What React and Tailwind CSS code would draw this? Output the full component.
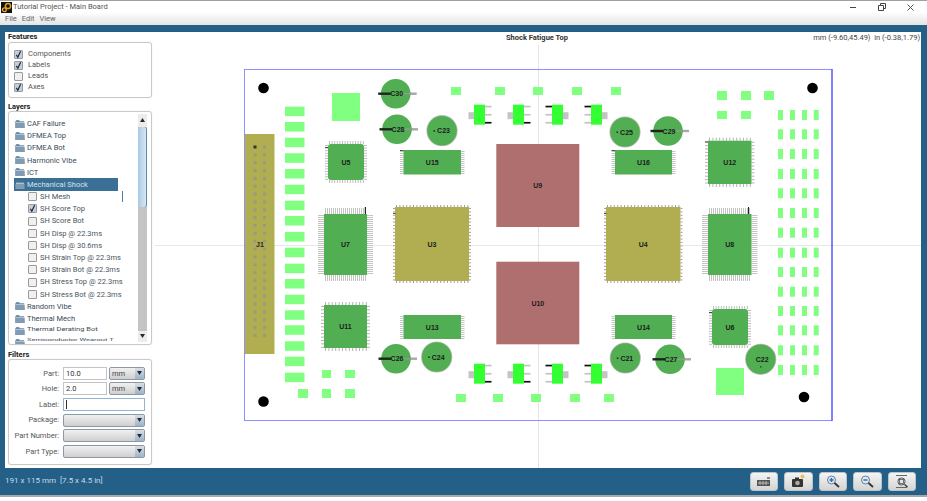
import { Fragment } from "react";

const LIGHT = "#80ff80";
const GREEN = "#52ae52";
const OLIVE = "#b0ae50";
const ROSE = "#b06f6f";

const layers = ["CAF Failure", "DFMEA Top", "DFMEA Bot", "Harmonic Vibe", "ICT"];
const shock = [
  ["SH Mesh", false],
  ["SH Score Top", true],
  ["SH Score Bot", false],
  ["SH Disp @ 22.3ms", false],
  ["SH Disp @ 30.6ms", false],
  ["SH Strain Top @ 22.3ms", false],
  ["SH Strain Bot @ 22.3ms", false],
  ["SH Stress Top @ 22.3ms", false],
  ["SH Stress Bot @ 22.3ms", false],
];

const chips = [
  { l: "U5", x: 328, y: 144, w: 36, h: 36, r: 3, f: GREEN, len: 3, p: 2.6, c: "#bdbdbd", mark: [325, 147, 3, 0.8] },
  { l: "U15", x: 403.5, y: 150, w: 57.5, h: 24.5, f: GREEN, len: 3.5, p: 2, c: "#c4c4c4", sides: "lr", mark: [400, 150, 3.5, 0.8] },
  { l: "U7", x: 324, y: 214, w: 43, h: 61, f: GREEN, len: 6, p: 2, c: "#c4c4c4", mark: [364.8, 207, 1.2, 7] },
  { l: "U3", x: 395, y: 207, w: 74, h: 74, f: OLIVE, len: 2, p: 3.4, c: "#a0a0a0", mark: [393, 213, 2.5, 0.8] },
  { l: "U9", x: 496.3, y: 144, w: 83, h: 83, f: ROSE },
  { l: "U10", x: 496.3, y: 261.7, w: 83, h: 82.6, f: ROSE },
  { l: "U11", x: 324, y: 305, w: 43, h: 43, f: GREEN, len: 3, p: 3.4, c: "#b5b5b5" },
  { l: "U13", x: 403.5, y: 315, w: 57.5, h: 24, f: GREEN, len: 3.5, p: 2, c: "#c4c4c4", sides: "lr" },
  { l: "U16", x: 615, y: 150, w: 57, h: 24.5, f: GREEN, len: 3.5, p: 2, c: "#c4c4c4", sides: "lr", mark: [611.5, 150, 3.5, 0.8] },
  { l: "U14", x: 615, y: 315, w: 57, h: 24, f: GREEN, len: 3.5, p: 2, c: "#c4c4c4", sides: "lr" },
  { l: "U12", x: 708, y: 140.7, w: 43.5, h: 43.3, f: GREEN, len: 3, p: 3.4, c: "#b5b5b5", mark: [705, 141.5, 3, 0.8] },
  { l: "U8", x: 708, y: 214, w: 43.5, h: 61, f: GREEN, len: 6, p: 2, c: "#c4c4c4", mark: [748, 207, 1, 7] },
  { l: "U4", x: 606, y: 207, w: 74.5, h: 74, f: OLIVE, len: 2, p: 3.4, c: "#a0a0a0", mark: [604, 213, 2.5, 0.8] },
  { l: "U6", x: 712, y: 309, w: 36, h: 36, r: 3, f: GREEN, len: 3, p: 2.6, c: "#bdbdbd", mark: [709, 312, 3, 0.8] },
];

// caps: bar = long black lead on the left, ring = grey halo with a small dot
const caps = [
  { l: "C30", x: 395.7, y: 93.7, bar: true },
  { l: "C28", x: 397, y: 129.3, bar: true },
  { l: "C23", x: 442, y: 130.7, ring: true },
  { l: "C26", x: 396, y: 358.7, bar: true },
  { l: "C24", x: 436.7, y: 357, ring: true },
  { l: "C25", x: 625, y: 132, ring: true },
  { l: "C29", x: 668, y: 131, bar: true },
  { l: "C21", x: 625.3, y: 358, ring: true },
  { l: "C27", x: 670, y: 359.3, bar: true },
  { l: "C22", x: 760.7, y: 359.3, ring: true, dotBelow: true },
];

const pads = [
  [451, 87, 10, 8], [495, 87, 10, 8], [533, 87, 10, 8], [572, 87, 10, 8], [611, 87, 10, 8],
  [717, 91, 10, 9], [741, 91, 10, 9], [764, 91, 10, 9], [717, 111, 10, 8], [741, 111, 10, 8],
  [456, 394, 10, 8], [493, 394, 10, 8], [531, 394, 10, 8], [570, 394, 10, 8], [604, 394, 10, 8],
  [322, 370, 9, 8], [345, 370, 10, 8], [298, 389, 10, 9], [322, 389, 9, 9], [345, 389, 10, 9],
  [332, 93, 28, 28], [716, 368, 28, 27],
];

const stripY = [106.7, 122, 137.7, 153.3, 169, 184.7, 200.7, 216, 232, 247.7, 263.7, 279, 294.7, 310.3, 325.3, 341.3, 356.7, 372.7];
const gridX = [778, 790, 802, 813.7];
const gridY = [110, 129.3, 149, 169, 188.3, 208, 227.7, 247.7, 267, 286.7, 306, 325.3, 345.3, 365];

// x, y, black lead side
const sots = [
  [474, 104.7, "r"], [513, 104.7, "r"], [552, 104.7, "l"], [591, 104.7, "l"],
  [474, 363.7, "r"], [513, 363.7, "r"], [552, 363.7, "l"], [591, 363.7, "l"],
];

function Leads({ c }) {
  if (!c.len) return null;
  const sides = c.sides || "lrtb";
  const ticks = [];
  if (sides.includes("l")) {
    for (let y = c.y + 1; y < c.y + c.h - 0.5; y += c.p) {
      ticks.push(<rect key={"l" + y} x={c.x - c.len} y={y} width={c.len} height={1} fill={c.c} />);
      ticks.push(<rect key={"r" + y} x={c.x + c.w} y={y} width={c.len} height={1} fill={c.c} />);
    }
  }
  if (sides.includes("t")) {
    for (let x = c.x + 1; x < c.x + c.w - 0.5; x += c.p) {
      ticks.push(<rect key={"t" + x} x={x} y={c.y - c.len} width={1} height={c.len} fill={c.c} />);
      ticks.push(<rect key={"b" + x} x={x} y={c.y + c.h} width={1} height={c.len} fill={c.c} />);
    }
  }
  return <>{ticks}</>;
}

function Board() {
  return (
    <svg className="w-full h-full block font-['Liberation_Sans',sans-serif]" viewBox="153 32 768 436">
      <line x1="155" y1="245.5" x2="921" y2="245.5" stroke="#e8e8e8" />
      <line x1="538.5" y1="45" x2="538.5" y2="468" stroke="#e4e4e4" />

      <rect x="244.5" y="69.5" width="587.5" height="351" fill="none" stroke="#8f8fff" />
      <line x1="832" y1="69" x2="832" y2="421" stroke="#3a3aff" />

      {[[263.5, 88], [263.5, 401.5], [812.5, 88], [804, 397]].map(([x, y]) => (
        <circle key={x + "-" + y} cx={x} cy={y} r="5.3" fill="#000" />
      ))}

      {/* connector */}
      <rect x="245" y="134" width="29.5" height="220" fill={OLIVE} />
      {Array.from({ length: 25 }).map((_, i) => (
        <Fragment key={i}>
          <rect x="253.5" y={145.5 + i * 7.85} width="3" height="3" fill={i === 0 ? "#333" : "#9a9a80"} />
          <rect x="263" y={145.5 + i * 7.85} width="3" height="3" fill="#9a9a80" />
        </Fragment>
      ))}
      <text x="260" y="247" fontSize="7" fontWeight="700" textAnchor="middle" fill="#222">J1</text>

      {stripY.map((y) => <rect key={y} x="285" y={y} width="19.5" height="9.5" fill={LIGHT} />)}
      {pads.map(([x, y, w, h]) => <rect key={x + "-" + y} x={x} y={y} width={w} height={h} fill={LIGHT} />)}
      {gridX.map((x) => gridY.map((y) => <rect key={x + "-" + y} x={x} y={y} width="5" height="10" fill={LIGHT} />))}

      {chips.map((c) => (
        <g key={c.l}>
          <Leads c={c} />
          <rect x={c.x} y={c.y} width={c.w} height={c.h} rx={c.r || 0} fill={c.f} />
          {c.mark && <rect x={c.mark[0]} y={c.mark[1]} width={c.mark[2]} height={c.mark[3]} fill="#222" />}
          <text x={c.x + c.w / 2} y={c.y + c.h / 2 + 2.5} fontSize="7" fontWeight="700" textAnchor="middle" fill="#1c1c1c">{c.l}</text>
        </g>
      ))}

      {caps.map((c) => (
        <g key={c.l}>
          {c.ring && <circle cx={c.x} cy={c.y} r="15.6" fill="#bcbcbc" />}
          {c.bar && <rect x={c.x + 4} y={c.y - 1.2} width="17" height="2.4" fill="#a8a8a8" />}
          <circle cx={c.x} cy={c.y} r="14.8" fill={GREEN} />
          {c.bar && <rect x={c.x - 17.5} y={c.y - 1.2} width="12.5" height="2.4" fill="#222" />}
          {c.bar && <rect x={c.x + 6} y={c.y - 0.8} width="9" height="1.6" fill="#8c9c8c" />}
          {c.ring && !c.dotBelow && <rect x={c.x - 8.5} y={c.y - 0.5} width="1.5" height="1.5" fill="#222" />}
          {c.dotBelow && <rect x={c.x - 0.5} y={c.y + 7} width="1.2" height="1.2" fill="#222" />}
          <text x={c.x + (c.bar ? 1 : 1.5)} y={c.y + 2.5} fontSize="7" fontWeight="700" textAnchor="middle" fill="#1c1c1c">{c.l}</text>
        </g>
      ))}

      {sots.map(([x, y, side]) => {
        const right = side === "r";
        return (
          <g key={x + "-" + y}>
            <rect x={right ? x - 5.5 : x + 11} y={y + 7.5} width="5.5" height="7" fill="#c4c4c4" />
            {[1.8, 10, 18].map((dy) => {
              const black = right ? dy === 18 : dy === 1.8;
              return (
                <rect key={dy} x={right ? x + 11 : x - 6.5} y={y + dy - 0.8} width="6.5" height="1.7" fill={black ? "#111" : "#c4c4c4"} />
              );
            })}
            <rect x={x} y={y} width="11" height="20" fill="#33ff33" />
          </g>
        );
      })}
    </svg>
  );
}

function Check({ on }) {
  return (
    <div className={`w-[9px] h-[9px] shrink-0 border border-[#9a9a9a] rounded-[1px] flex items-center justify-center ${on ? "bg-[#c3cfdc]" : "bg-[#f0f0f0]"}`}>
      {on && (
        <svg width="8" height="9" viewBox="0 0 8 9">
          <path d="M1.6 5 L3.2 7.6 L6.4 0.8" fill="none" stroke="#1e2a38" strokeWidth="1.4" />
        </svg>
      )}
    </div>
  );
}

function Folder() {
  return (
    <svg width="10" height="10" viewBox="0 0 11 10" className="shrink-0">
      <path d="M0.5 2 L1.5 0.8 H4.5 L5.5 2 H10 L10.5 9.5 H0.5 Z" fill="#4f7391" />
      <path d="M0.5 4 H10.5 V9.5 H0.5 Z" fill="#7f9cb4" />
      <path d="M1 2.6 H10 V3.6 H1 Z" fill="#d2dde6" />
    </svg>
  );
}

function Arrow({ up }) {
  return (
    <svg width="5" height="4" viewBox="0 0 5 4">
      <path d={up ? "M2.5 0 L5 4 H0 Z" : "M0 0 H5 L2.5 4 Z"} fill="#2a2a2a" />
    </svg>
  );
}

function Combo({ text, wide }) {
  return (
    <div className={`${wide ? "w-[82px]" : "w-[36px]"} h-[13px] flex border border-[#8d98a5] rounded-[2px] bg-gradient-to-b from-[#f1f1f1] to-[#cfcfcf] overflow-hidden`}>
      <div className="flex-1 pl-[2px] leading-[12px] text-[7.5px] text-[#444]">{text}</div>
      <div className="w-[9px] bg-gradient-to-b from-[#d5dfe9] to-[#9db3c8] flex items-center justify-center">
        <Arrow />
      </div>
    </div>
  );
}

function Field({ text, focus }) {
  return (
    <div className={`h-[13px] ${focus ? "w-[82px] border-[#8fb4d6]" : "w-[44px] border-[#c4c4c4]"} border bg-white pl-[2px] leading-[12px] text-[7.5px] text-[#333]`}>
      {text}
      {focus && <span className="inline-block w-px h-[9px] bg-[#333] mt-[1px]" />}
    </div>
  );
}

function FilterRow({ label, children }) {
  return (
    <div className="h-[15.6px] flex items-center">
      <div className="w-[46px] mr-[4px] text-right text-[7.5px] text-[#555] whitespace-nowrap">{label}</div>
      <div className="flex gap-[2px]">{children}</div>
    </div>
  );
}

function TreeRow({ text, cls }) {
  return (
    <div className="h-[12.2px] flex items-center gap-[2px] pl-[1px]">
      <Folder />
      <span className={`text-[7.5px] text-[#3a4a58] whitespace-nowrap ${cls || ""}`}>{text}</span>
    </div>
  );
}

function ToolBtn({ children }) {
  return (
    <div className="w-[28.5px] h-[19px] rounded-[3px] bg-gradient-to-b from-[#f4f4f4] to-[#d4d4d4] border border-[#b9c4cc] flex items-center justify-center">
      <svg width="16" height="15" viewBox="0 0 16 15">{children}</svg>
    </div>
  );
}

export default function App() {
  return (
    <div className="w-[927px] h-[501px] bg-white flex flex-col overflow-hidden font-['Roboto',sans-serif]">
      <div className="h-[13px] border-t border-[#a0a0a0] flex items-center bg-white">
        <svg width="11" height="11" viewBox="0 0 11 11" className="ml-px shrink-0">
          <rect width="11" height="11" fill="#111" />
          <circle cx="7" cy="4" r="2.6" fill="none" stroke="#e0a020" strokeWidth="1.5" />
          <circle cx="3.4" cy="7.8" r="1.9" fill="none" stroke="#e8b030" strokeWidth="1.3" />
        </svg>
        <span className="ml-px text-[7.5px] text-[#555]">Tutorial Project - Main Board</span>
        <div className="ml-auto flex items-center">
          <div className="w-[6px] h-px bg-[#444] mr-[22px]" />
          <svg width="8" height="8" viewBox="0 0 8 8" className="mr-[21px]">
            <path d="M0.5 2.5 H5.5 V7.5 H0.5 Z M2.5 2.5 V0.5 H7.5 V5.5 H5.5" fill="none" stroke="#444" />
          </svg>
          <svg width="7" height="7" viewBox="0 0 7 7" className="mr-[13px]">
            <path d="M0.5 0.5 L6.5 6.5 M6.5 0.5 L0.5 6.5" stroke="#555" />
          </svg>
        </div>
      </div>
      <div className="h-[12px] bg-gradient-to-b from-[#fdfdfd] to-[#e4e4e4] flex items-center gap-[5px] pl-[5px] text-[7.5px] text-[#666]">
        <span>File</span>
        <span>Edit</span>
        <span>View</span>
      </div>

      <div className="flex-1 bg-[#235f86] pt-[7px] pl-[5px] pr-[6px] flex flex-col min-h-0">
        <div className="flex-1 flex min-h-0">
          <div className="w-[148px] bg-white pl-[3px] pr-px shrink-0">
            <div className="h-[10px] text-[7.5px] leading-[10px] font-bold text-[#222]">Features</div>
            <div className="h-[55.5px] border border-[#c9c9c9] rounded-[3px] pt-[5.5px] pl-[5px] flex flex-col shadow-[0_0_1px_#ccc]">
              {[["Components", true], ["Labels", true], ["Leads", false], ["Axes", true]].map(([t, on]) => (
                <div key={t} className="h-[11px] flex items-center gap-[5px]">
                  <Check on={on} />
                  <span className="text-[7.5px] text-[#555]">{t}</span>
                </div>
              ))}
            </div>

            <div className="h-[13px] pt-[4px] text-[7.5px] leading-[10px] font-bold text-[#222]">Layers</div>
            <div className="h-[234px] border border-[#c9c9c9] rounded-[3px] relative overflow-hidden shadow-[0_0_1px_#ccc] pl-[5px] pt-[6px]">
              {layers.map((t) => <TreeRow key={t} text={t} />)}
              <div className="h-[12.2px] w-[104px] bg-[#3a6f96] flex items-center gap-[2px] pl-[1px]">
                <Folder />
                <span className="text-[7.5px] text-[#d4e2ec] whitespace-nowrap">Mechanical Shock</span>
              </div>
              {shock.map(([t, on]) => (
                <div key={t} className="h-[12.2px] flex items-center gap-[3px] pl-[14px]">
                  <Check on={on} />
                  <span className="text-[7.5px] text-[#4a5560] whitespace-nowrap">{t}</span>
                </div>
              ))}
              <TreeRow text="Random Vibe" />
              <TreeRow text="Thermal Mech" />
              <TreeRow text="Thermal Derating Bot" cls="scale-y-75 origin-top" />
              <TreeRow text="Semiconductor Wearout T" cls="scale-y-50 origin-top" />

              <div className="absolute left-[113px] top-[79px] w-px h-[11px] bg-[#4f7da3]" />
              <div className="absolute right-[4px] top-[2px] bottom-[2px] w-[9px] bg-[#c4c4c4] flex flex-col">
                <div className="h-[13px] bg-[#ececec] flex items-center justify-center"><Arrow up /></div>
                <div className="h-[80px] bg-gradient-to-r from-[#a9c9e6] to-[#d9e8f4] rounded-[3px] border-r border-[#5d88ad]" />
                <div className="flex-1" />
                <div className="h-[11px] bg-[#ececec] flex items-center justify-center"><Arrow /></div>
              </div>
            </div>

            <div className="h-[14px] pt-[5px] text-[7.5px] leading-[9px] font-bold text-[#222]">Filters</div>
            <div className="h-[106px] border border-[#c9c9c9] rounded-[3px] pt-[6px] pl-[4px] shadow-[0_0_1px_#ccc]">
              <FilterRow label="Part:"><Field text="10.0" /><Combo text="mm" /></FilterRow>
              <FilterRow label="Hole:"><Field text="2.0" /><Combo text="mm" /></FilterRow>
              <FilterRow label="Label:"><Field focus /></FilterRow>
              <FilterRow label="Package:"><Combo wide /></FilterRow>
              <FilterRow label="Part Number:"><Combo wide /></FilterRow>
              <FilterRow label="Part Type:"><Combo wide /></FilterRow>
            </div>
          </div>

          <div className="flex-1 bg-white relative min-w-0">
            <Board />
            <div className="absolute left-0 right-0 top-0 text-center text-[7.5px] font-bold text-[#333]">Shock Fatigue Top</div>
            <div className="absolute right-[1px] top-0 text-[7.5px] text-[#444] whitespace-pre">mm (-9.60,45.49)  in (-0.38,1.79)</div>
          </div>
        </div>

        <div className="h-[26px] flex items-center shrink-0 justify-between">
          <span className="text-[8px] text-[#c8dbe8] whitespace-pre">191 x 115 mm  [7.5 x 4.5 in]</span>
          <div className="flex gap-[6px] mr-[5px]">
            <ToolBtn>
              <rect x="1" y="6" width="13" height="6" fill="#555" />
              <path d="M2 9 H13 M4 7 V11 M7 7 V11 M10 7 V11" stroke="#ccc" strokeWidth="0.8" />
              <rect x="11" y="3" width="3" height="2" fill="#888" />
            </ToolBtn>
            <ToolBtn>
              <rect x="2" y="5" width="11" height="8" rx="1" fill="#333" />
              <rect x="5" y="3.5" width="4" height="2" fill="#333" />
              <circle cx="7.5" cy="9" r="2.3" fill="#aaa" />
              <circle cx="12.5" cy="2.5" r="2" fill="#e8c060" />
            </ToolBtn>
            <ToolBtn>
              <circle cx="6.5" cy="6" r="4" fill="#dbe8f2" stroke="#6a8094" />
              <path d="M4.5 6 H8.5 M6.5 4 V8" stroke="#1f6fc0" strokeWidth="1.4" />
              <path d="M9.5 9 L14 13" stroke="#333" strokeWidth="1.8" />
            </ToolBtn>
            <ToolBtn>
              <circle cx="6.5" cy="6" r="4" fill="#dbe8f2" stroke="#6a8094" />
              <path d="M4.5 6 H8.5" stroke="#1f6fc0" strokeWidth="1.4" />
              <path d="M9.5 9 L14 13" stroke="#333" strokeWidth="1.8" />
            </ToolBtn>
            <ToolBtn>
              <path d="M2 1.5 H13 M2 13.5 H13" stroke="#666" />
              <circle cx="7.5" cy="7.5" r="3.6" fill="#dde6ec" stroke="#555" />
              <rect x="5.5" y="5.5" width="4" height="4" fill="none" stroke="#555" strokeWidth="0.8" />
              <path d="M10.5 10.5 L13.5 13" stroke="#333" strokeWidth="1.4" />
            </ToolBtn>
          </div>
        </div>
        <div className="h-[1px] shrink-0" />
      </div>
      <div className="h-[6px] border-t-2 border-[#a8a8a8] bg-white shrink-0" />
    </div>
  );
}
